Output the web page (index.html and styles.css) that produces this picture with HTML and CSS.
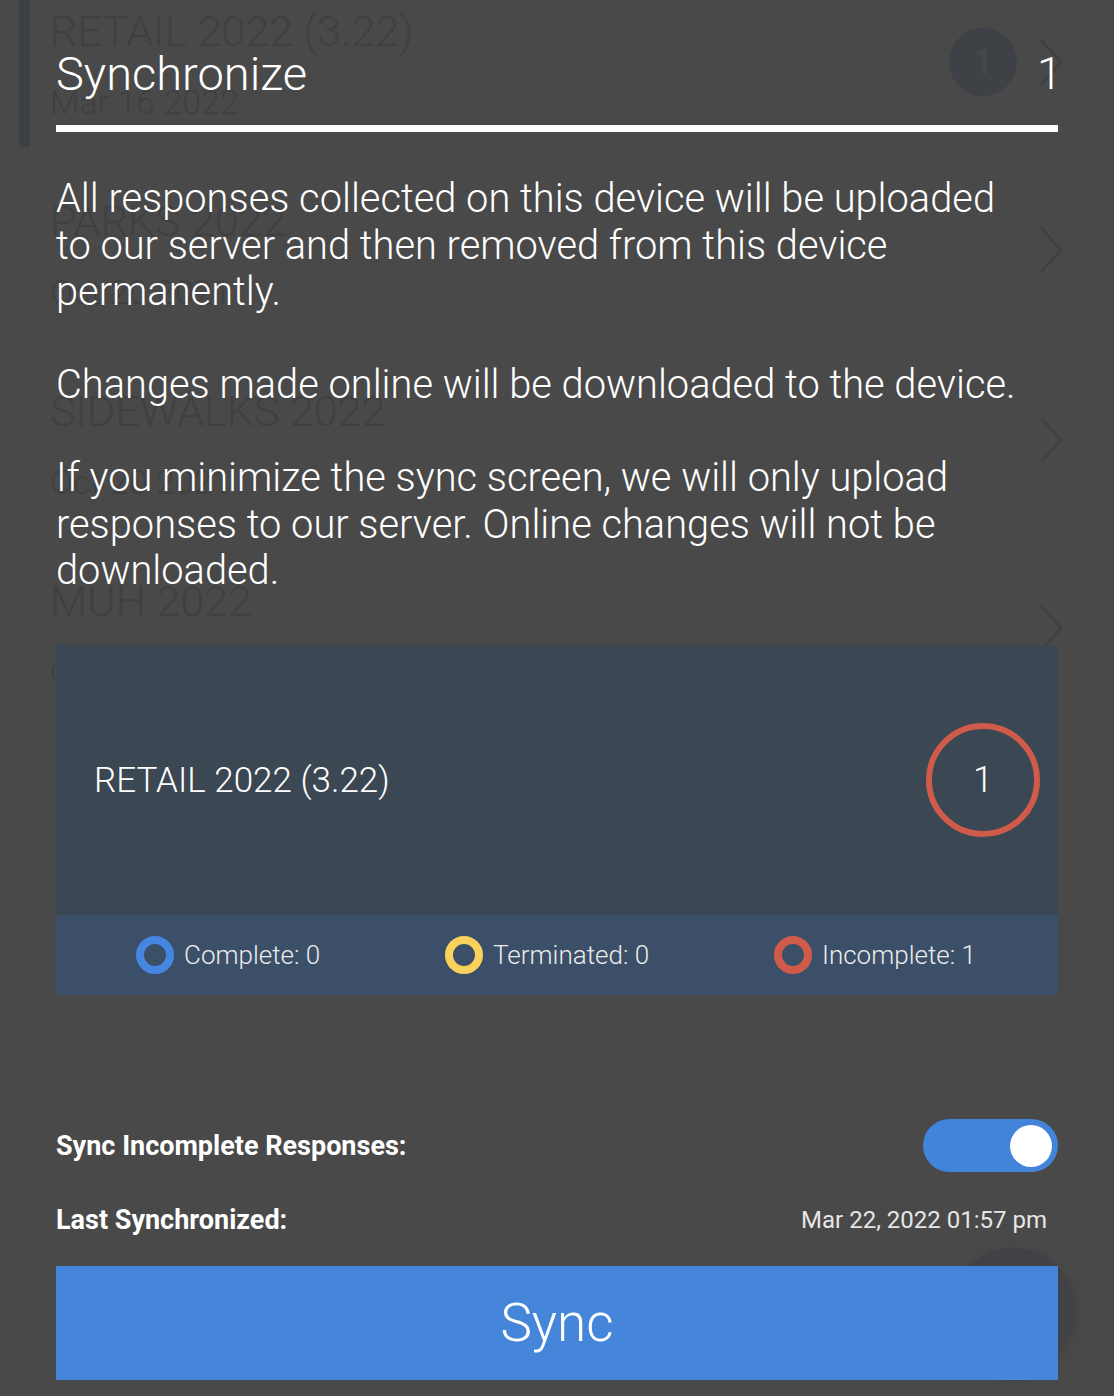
FILE: index.html
```html
<!DOCTYPE html>
<html lang="en">
<head>
<meta charset="utf-8">
<title>Synchronize</title>
<link rel="stylesheet" href="styles.css">
</head>
<body>
  <main class="survey-list">
    <div class="survey-item is-selected">
      <span class="accent"></span>
      <div class="survey-text">
        <div class="survey-name">RETAIL 2022 (3.22)</div>
        <div class="survey-date">Mar 16 2022</div>
      </div>
      <span class="survey-badge">1</span>
      <svg class="chevron" viewBox="0 0 26 50" width="26" height="50"><polyline points="3,3 23,25 3,47"/></svg>
    </div>
    <div class="survey-item">
      <span class="accent"></span>
      <div class="survey-text">
        <div class="survey-name">PARKS 2022</div>
        <div class="survey-date">Oct 20 2021</div>
      </div>
      <svg class="chevron" viewBox="0 0 26 50" width="26" height="50"><polyline points="3,3 23,25 3,47"/></svg>
    </div>
    <div class="survey-item">
      <span class="accent"></span>
      <div class="survey-text">
        <div class="survey-name">SIDEWALKS 2022</div>
        <div class="survey-date">Oct 20 2021</div>
      </div>
      <svg class="chevron" viewBox="0 0 26 50" width="26" height="50"><polyline points="3,3 23,25 3,47"/></svg>
    </div>
    <div class="survey-item">
      <span class="accent"></span>
      <div class="survey-text">
        <div class="survey-name">MUH 2022</div>
        <div class="survey-date">Oct 20 2021</div>
      </div>
      <svg class="chevron" viewBox="0 0 26 50" width="26" height="50"><polyline points="3,3 23,25 3,47"/></svg>
    </div>
    <span class="fab"></span>
  </main>

  <section class="sync-modal">
    <header class="sync-header">
      <h1 class="sync-title">Synchronize</h1>
      <span class="sync-count">1</span>
    </header>

    <div class="sync-info">
      <p>All responses collected on this device will be uploaded<br>to our server and then removed from this device<br>permanently.</p>
      <p>Changes made online will be downloaded to the device.</p>
      <p>If you minimize the sync screen, we will only upload<br>responses to our server. Online changes will not be<br>downloaded.</p>
    </div>

    <div class="survey-card">
      <div class="card-main">
        <span class="card-name">RETAIL 2022 (3.22)</span>
        <span class="card-ring">1</span>
      </div>
      <div class="card-legend">
        <div class="legend-item"><span class="dot dot-blue"></span>Complete: 0</div>
        <div class="legend-item"><span class="dot dot-yellow"></span>Terminated: 0</div>
        <div class="legend-item"><span class="dot dot-red"></span>Incomplete: 1</div>
      </div>
    </div>

    <div class="setting-row toggle-row">
      <span class="setting-label">Sync Incomplete Responses:</span>
      <span class="toggle"><span class="knob"></span></span>
    </div>
    <div class="setting-row date-row">
      <span class="setting-label">Last Synchronized:</span>
      <span class="setting-value">Mar 22, 2022 01:57 pm</span>
    </div>

    <button class="sync-button" type="button">Sync</button>
  </section>
</body>
</html>
```

FILE: styles.css
```css
* { box-sizing: border-box; }

html, body {
  margin: 0;
  padding: 0;
}

body {
  width: 1114px;
  height: 1396px;
  overflow: hidden;
  background: #494949;
  font-family: Roboto, "Liberation Sans", sans-serif;
  position: relative;
}

/* ---------- background list (dimmed) ---------- */
.survey-list {
  display: flex;
  flex-direction: column;
  height: 1396px;
}

.survey-item {
  display: flex;
  align-items: flex-start;
  height: 190px;
  flex: none;
}

.accent {
  width: 11px;
  height: 147px;
  margin-left: 19px;
  margin-right: 20px;
  flex: none;
}

.is-selected .accent { background: #3d4146; }

.survey-text {
  flex: 1;
  color: #404040;
  font-weight: 300;
  padding-top: 5px;
}

.survey-name {
  font-size: 43px;
  line-height: 52px;
}

.survey-date {
  font-size: 34px;
  line-height: 40px;
  margin-top: 25px;
}

.survey-badge {
  width: 68px;
  height: 68px;
  margin-top: 28px;
  border-radius: 50%;
  background: #3e4146;
  color: #45484d;
  font-size: 36px;
  font-weight: 700;
  display: flex;
  align-items: center;
  justify-content: center;
  margin-right: 21px;
}

.chevron {
  margin-top: 37px;
  margin-right: 50px;
  fill: none;
  stroke: #404040;
  stroke-width: 2.5;
}

.survey-item:nth-child(2) .chevron { margin-top: 35px; }
.survey-item:nth-child(3) .chevron { margin-top: 35px; }
.survey-item:nth-child(4) .chevron { margin-top: 33px; }

.fab {
  position: absolute;
  left: 951px;
  top: 1248px;
  width: 124px;
  height: 124px;
  border-radius: 50%;
  background: #404246;
  box-shadow: 0 4px 14px rgba(0, 0, 0, 0.12);
}

/* ---------- modal ---------- */
.sync-modal {
  position: absolute;
  inset: 0;
  padding: 0 56px;
  display: flex;
  flex-direction: column;
  color: #fff;
}

.sync-header {
  display: flex;
  justify-content: space-between;
  align-items: center;
  height: 132px;
  padding-top: 22px;
  border-bottom: 7px solid #fff;
  flex: none;
}

.sync-title {
  margin: 0;
  font-size: 47px;
  font-weight: 300;
  line-height: 56px;
}

.sync-count {
  font-size: 45px;
  font-weight: 300;
  line-height: 56px;
  margin-right: -4px;
}

.sync-info {
  margin-top: 44px;
  font-size: 39.8px;
  font-weight: 300;
  line-height: 46.5px;
}

.sync-info p {
  margin: 0 0 46.5px;
  white-space: nowrap;
}

.sync-info p:last-child { margin-bottom: 0; }

.survey-card {
  margin-top: 50.5px;
  flex: none;
}

.card-main {
  height: 270px;
  background: #3b4753;
  display: flex;
  align-items: center;
  justify-content: space-between;
  padding: 0 18px 0 38px;
}

.card-name {
  font-size: 35px;
  font-weight: 300;
}

.card-ring {
  width: 114px;
  height: 114px;
  border: 6px solid #d05b4b;
  border-radius: 50%;
  display: flex;
  align-items: center;
  justify-content: center;
  font-size: 36px;
  font-weight: 300;
}

.card-legend {
  height: 80px;
  background: #3b4f68;
  display: flex;
  align-items: center;
  justify-content: space-between;
  padding: 0 82px 0 80px;
}

.legend-item {
  display: flex;
  align-items: center;
  gap: 10px;
  font-size: 26px;
  font-weight: 300;
  color: #ececec;
}

.dot {
  width: 38px;
  height: 38px;
  border-radius: 50%;
  border: 8px solid;
  flex: none;
}

.dot-blue { border-color: #4586e0; }
.dot-yellow { border-color: #f8d25b; }
.dot-red { border-color: #d05b4b; }

.setting-row {
  display: flex;
  align-items: center;
  justify-content: space-between;
  flex: none;
}

.toggle-row {
  margin-top: 124px;
  height: 53px;
}

.date-row {
  margin-top: 33px;
  height: 30px;
}

.setting-label {
  font-size: 27px;
  font-weight: 700;
}

.setting-value {
  font-size: 24px;
  font-weight: 400;
  color: #e6e6e6;
  padding-right: 11px;
}

.toggle {
  width: 135px;
  height: 53px;
  border-radius: 27px;
  background: #4384db;
  display: flex;
  align-items: center;
  justify-content: flex-end;
  padding-right: 6px;
}

.knob {
  width: 42px;
  height: 42px;
  border-radius: 50%;
  background: #fff;
}

.sync-button {
  margin-top: 31px;
  height: 114px;
  border: none;
  background: #4586db;
  color: #fff;
  font-family: Roboto, "Liberation Sans", sans-serif;
  font-size: 53px;
  font-weight: 300;
  flex: none;
  padding: 0;
}
```
